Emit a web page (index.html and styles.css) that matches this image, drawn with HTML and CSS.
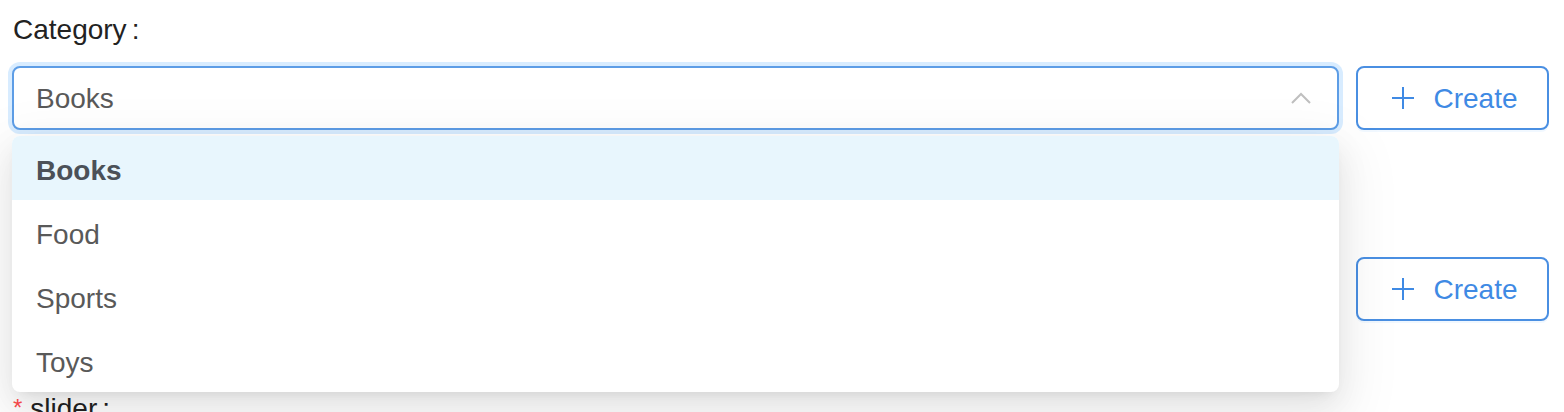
FILE: index.html
```html
<!DOCTYPE html>
<html lang="en">
<head>
<meta charset="utf-8">
<title>Category form</title>
<link rel="stylesheet" href="styles.css">
</head>
<body>
<form class="form">
  <div class="item">
    <label class="label">Category<span class="colon">:</span></label>
    <div class="row">
      <div class="select focused">
        <span class="value">Books</span>
        <svg class="arrow" width="20" height="12" viewBox="0 0 20 12"><polyline points="1,11 10,2 19,11" fill="none" stroke="#bfbfbf" stroke-width="2"/></svg>
        <div class="dropdown">
          <div class="option selected">Books</div>
          <div class="option">Food</div>
          <div class="option">Sports</div>
          <div class="option">Toys</div>
        </div>
      </div>
      <button type="button" class="btn">
        <svg class="plus" width="24" height="24" viewBox="0 0 24 24"><path d="M12 1V23M1 12H23" stroke="currentColor" stroke-width="2" fill="none"/></svg>
        <span>Create</span>
      </button>
    </div>
  </div>
  <div class="item item-tight">
    <div class="label"></div>
    <div class="row">
      <div class="select"></div>
      <button type="button" class="btn">
        <svg class="plus" width="24" height="24" viewBox="0 0 24 24"><path d="M12 1V23M1 12H23" stroke="currentColor" stroke-width="2" fill="none"/></svg>
        <span>Create</span>
      </button>
    </div>
  </div>
  <div class="item">
    <label class="label"><span class="req">*</span>slider<span class="colon">:</span></label>
  </div>
</form>
</body>
</html>
```
FILE: styles.css
```css
html, body {
  margin: 0;
  padding: 0;
  background: #ffffff;
  overflow: hidden;
}
body {
  font-family: "Liberation Sans", Arial, sans-serif;
  font-size: 28px;
  color: #262626;
}
.form {
  padding: 6px 15px 0 12px;
}
.item {
  margin-bottom: 67px;
}
.item-tight {
  margin-bottom: 63px;
}
.label {
  display: block;
  box-sizing: border-box;
  height: 60px;
  line-height: 44px;
  padding-top: 2px;
  padding-left: 1px;
  color: #222222;
}
.colon {
  margin-left: 5px;
}
.req {
  color: #ff4d4f;
  font-size: 24px;
  margin-right: 8px;
  vertical-align: 2px;
}
.row {
  display: flex;
  gap: 17px;
  align-items: center;
}
.select {
  position: relative;
  flex: 1;
  height: 64px;
  box-sizing: border-box;
  border: 2px solid #d9d9d9;
  border-radius: 8px;
  display: flex;
  align-items: center;
  padding: 2px 26px 0 22px;
  background: #fff;
}
.select.focused {
  border-color: #5d9de6;
  box-shadow: 0 0 0 4px rgba(24, 144, 255, 0.17);
  z-index: 5;
}
.value {
  flex: 1;
  color: #595959;
}
.arrow {
  display: block;
  margin-top: -2px;
}
.dropdown {
  position: absolute;
  left: -2px;
  right: -2px;
  top: calc(100% + 8px);
  background: #fff;
  border-radius: 8px;
  overflow: hidden;
  box-shadow: 0 6px 12px -8px rgba(0,0,0,0.12), 0 12px 32px 0 rgba(0,0,0,0.08), 0 18px 56px 16px rgba(0,0,0,0.05);
  z-index: 10;
}
.option {
  height: 64px;
  box-sizing: border-box;
  line-height: 64px;
  padding: 3px 24px 0;
  color: #595959;
}
.option.selected {
  background: #e8f6fd;
  font-weight: 700;
  color: #4b5158;
}
.btn {
  width: 193px;
  height: 64px;
  box-sizing: border-box;
  border: 2px solid #4a8fe2;
  border-radius: 8px;
  background: #fff;
  color: #3f8ae4;
  font-family: inherit;
  font-size: 28px;
  display: flex;
  align-items: center;
  justify-content: center;
  gap: 18px;
  padding: 2px 0 0 4px;
  box-shadow: 0 2px 0 rgba(24, 144, 255, 0.06);
  cursor: pointer;
}
.plus {
  display: block;
  margin-top: -2px;
}
```
